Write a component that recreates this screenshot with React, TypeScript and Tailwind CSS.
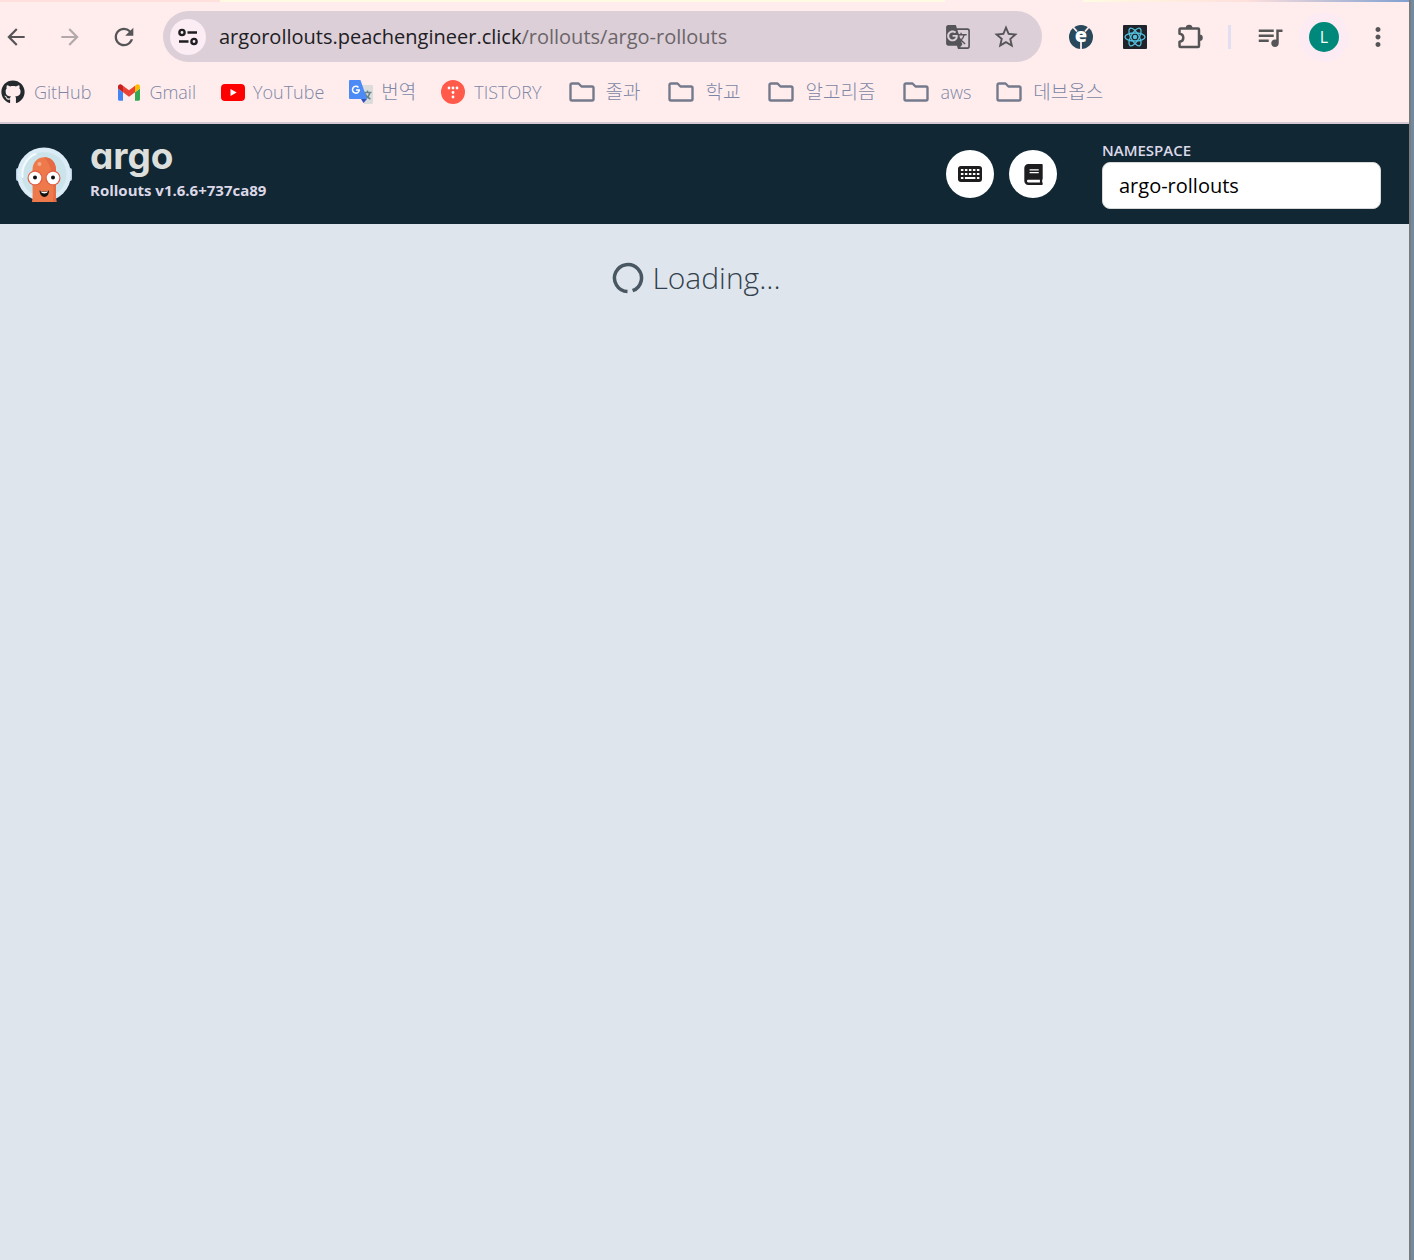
import React from 'react';
import { MdArrowBack, MdArrowForward, MdRefresh, MdStarBorder, MdGTranslate, MdQueueMusic, MdMoreVert } from 'react-icons/md';
import { FaGithub, FaBook } from 'react-icons/fa';

const iconButton = 'flex shrink-0 items-center justify-center text-[#555557]';

function TuneIcon() {
  return (
    <svg width="22" height="22" viewBox="0 0 22 22" fill="none" stroke="#1f1f23" strokeWidth="2.4">
      <circle cx="5" cy="6.5" r="2.6" />
      <path d="M10.5 6.5H20M2 15.5h9.5" />
      <circle cx="17" cy="15.5" r="2.6" />
    </svg>
  );
}

function PuzzleIcon() {
  return (
    <svg width="28" height="28" viewBox="0 0 28 28">
      <path
        d="M4.500 5.500H22a1 1 0 0 1 1 1V23a1 1 0 0 1-1 1H4.500a1 1 0 0 1-1-1v-4.200c2.400-.3 3.800-1.800 3.800-4s-1.400-3.700-3.800-4V6.500a1 1 0 0 1 1-1z"
        fill="none" stroke="#555557" strokeWidth="2.500" strokeLinejoin="round"
      />
      <path d="M9.800 5a3.300 3.300 0 0 1 6.600 0zM23.500 11.500a3.300 3.300 0 0 1 0 6.600z" fill="#555557" />
    </svg>
  );
}

function RobotIcon() {
  return (
    <svg width="24" height="24" viewBox="0 0 24 24" className="overflow-visible">
      <circle cx="12" cy="12" r="12" fill="#29485c" />
      <path d="M4 2l4 4.500M20 2l-4 4.500M12 17v7" stroke="#ffedee" strokeWidth="1.800" />
      <text x="12" y="17" textAnchor="middle" fill="#fff" className="text-[20px] font-extrabold">e</text>
    </svg>
  );
}

function ReactIcon() {
  return (
    <svg width="24" height="24" viewBox="0 0 24 24">
      <rect width="24" height="24" rx="1" fill="#20232a" />
      <g fill="none" stroke="#53c1de" strokeWidth="1.300">
        <ellipse cx="12" cy="12" rx="10" ry="4" />
        <ellipse cx="12" cy="12" rx="10" ry="4" transform="rotate(60 12 12)" />
        <ellipse cx="12" cy="12" rx="10" ry="4" transform="rotate(120 12 12)" />
      </g>
      <circle cx="12" cy="12" r="2.200" fill="#53c1de" />
    </svg>
  );
}

function KeyboardIcon() {
  return (
    <svg width="24" height="16" viewBox="0 0 24 16">
      <rect width="24" height="16" rx="3" fill="#1d1d1f" />
      <g fill="none" stroke="#fff" strokeWidth="2.200">
        <path d="M2.900 4h18.500" strokeDasharray="2.500 1.500" />
        <path d="M2.900 8h18.500" strokeDasharray="2.500 1.500" />
        <path d="M2.900 12h2.500M6.900 12h10.500M18.900 12h2.500" />
      </g>
    </svg>
  );
}

function GmailIcon() {
  return (
    <svg width="22" height="17" viewBox="52 42 88 66">
      <path fill="#4285f4" d="M58 108h14V74L52 59v43c0 3.320 2.690 6 6 6" />
      <path fill="#34a853" d="M120 108h14c3.320 0 6-2.690 6-6V59l-20 15" />
      <path fill="#fbbc04" d="M120 48v26l20-15v-8c0-7.420-8.470-11.650-14.400-7.200" />
      <path fill="#ea4335" d="M72 74V48l24 18 24-18v26L96 92" />
      <path fill="#c5221f" d="M52 51v8l20 15V48l-5.600-4.200c-5.940-4.450-14.400-.22-14.400 7.200" />
    </svg>
  );
}

function YouTubeIcon() {
  return (
    <svg width="24" height="17" viewBox="0 0 24 17">
      <rect width="24" height="17" rx="4" fill="#f00" />
      <path d="M9.500 5v7l6.200-3.500z" fill="#fff" />
    </svg>
  );
}

function TranslateIcon() {
  return (
    <svg width="24" height="24" viewBox="0 0 24 24">
      <path d="M10 5h13a1 1 0 0 1 1 1v17a1 1 0 0 1-1 1h-8z" fill="#dcdcdc" />
      <path d="M14.500 12.500h8M18.500 10.500v2M21 12.500c-.8 3-2.700 5.300-5 6.500M16 13.500c1 2.500 3 4.500 5.500 5.500" stroke="#66858b" strokeWidth="1.400" fill="none" />
      <path d="M12 19h6l-3.500 4z" fill="#3450b8" />
      <path d="M1 0h10.500l6.500 19H1a1 1 0 0 1-1-1V1a1 1 0 0 1 1-1z" fill="#4c8bf5" />
      <path d="M9.500 7.500A3.400 3.400 0 1 0 10.300 10H7" stroke="#fff" strokeWidth="1.500" fill="none" />
    </svg>
  );
}

function TistoryIcon() {
  return (
    <svg width="24" height="24" viewBox="0 0 24 24">
      <circle cx="12" cy="12" r="12" fill="#ff5a4a" />
      <g fill="#fff">
        <circle cx="8" cy="8" r="1.400" /><circle cx="12" cy="8" r="1.400" /><circle cx="16" cy="8" r="1.400" />
        <circle cx="12" cy="12.500" r="1.400" /><circle cx="12" cy="17" r="1.400" />
      </g>
    </svg>
  );
}

function FolderIcon() {
  return (
    <svg width="26" height="20" viewBox="0 0 26 20" fill="none" stroke="#747a8c" strokeWidth="2.400" strokeLinejoin="round">
      <path d="M3 1.500h6.500l3 3H23a1.500 1.500 0 0 1 1.500 1.500v11a1.500 1.500 0 0 1-1.500 1.500H3A1.500 1.500 0 0 1 1.500 17V3A1.500 1.500 0 0 1 3 1.500z" />
    </svg>
  );
}

function ArgoMascot() {
  return (
    <svg width="56" height="56" viewBox="0 0 56 56">
      <rect y="22" width="56" height="13" rx="2" fill="#b4cde2" />
      <circle cx="28" cy="28.500" r="27" fill="#dcecf6" />
      <circle cx="28" cy="28.500" r="22.500" fill="#cbe4eb" />
      <path d="M6.500 31c-1-10 4-19 13-23" stroke="#f4fbfd" strokeWidth="2" fill="none" strokeLinecap="round" />
      <path d="M16 56c1-5 .5-12 .5-18V24c0-17 23.500-17 23.500 0v14c0 6-.5 13 .5 18z" fill="#ee794b" />
      <path d="M28 11.300c7 0 12 4.500 12 12.700v14c0 6-.5 13 .5 18H37c1-10 2-34-9-44.700z" fill="#e56a45" />
      <circle cx="19" cy="32" r="7.500" fill="#e35f45" />
      <circle cx="37" cy="32" r="7.500" fill="#e35f45" />
      <circle cx="19" cy="32" r="6.300" fill="#fff" />
      <circle cx="37" cy="32" r="6.300" fill="#fff" />
      <circle cx="19" cy="31.500" r="2" fill="#111" />
      <circle cx="37" cy="31.500" r="2" fill="#111" />
      <path d="M23.500 44.500c3 1.500 6.500 1.500 9.500 0 0 8.500-9 8.500-9.500 0z" fill="#111" />
      <path d="M24.500 45.200c2.500 1 5 1 7.500 0-1 3-6 3-7.500 0z" fill="#fff" />
      <circle cx="23.500" cy="18" r="2" fill="#f5a889" />
    </svg>
  );
}

const latinItem = 'gap-[9px] text-[18px]';
const folderItem = 'gap-[11px] pr-[3px] text-[19px]';

const bookmarks: { label: string; icon: React.ReactNode; className: string }[] = [
  { label: 'GitHub', icon: <FaGithub size={24} color="#24292e" />, className: latinItem + ' pr-[2px]' },
  { label: 'Gmail', icon: <GmailIcon />, className: latinItem },
  { label: 'YouTube', icon: <YouTubeIcon />, className: 'gap-2 text-[18px]' },
  { label: '번역', icon: <TranslateIcon />, className: 'gap-2 text-[19px]' },
  { label: 'TISTORY', icon: <TistoryIcon />, className: latinItem + ' pr-[2px]' },
  { label: '졸과', icon: <FolderIcon />, className: folderItem },
  { label: '학교', icon: <FolderIcon />, className: folderItem },
  { label: '알고리즘', icon: <FolderIcon />, className: folderItem },
  { label: 'aws', icon: <FolderIcon />, className: 'gap-[11px] text-[18px]' },
  { label: '데브옵스', icon: <FolderIcon />, className: folderItem },
];

function BrowserChrome() {
  return (
    <div className="border-b-2 border-[#d5c8d3] bg-[#ffedee]">
      <div className="flex h-[2px]">
        <div className="w-[220px] bg-[#ffe0dc]" />
        <div className="flex-1 bg-[#fffbe2]" />
        <div className="w-[138px]" />
        <div className="w-[326px] bg-linear-to-r from-[#fffbe2] via-[#ffe0dc] to-[#7f9fd0]" />
      </div>
      <div className="flex h-[69px] items-center pr-4">
        <button aria-label="Back" className={iconButton + ' ml-1 size-6'}><MdArrowBack size={26} className="shrink-0" /></button>
        <button aria-label="Forward" className="ml-[30px] flex size-6 shrink-0 items-center justify-center text-[#b3a9ab]"><MdArrowForward size={26} className="shrink-0" /></button>
        <button aria-label="Reload" className={iconButton + ' ml-[30px] size-6'}><MdRefresh size={28} className="shrink-0" /></button>
        <div className="ml-[27px] flex h-[51px] min-w-0 flex-1 items-center rounded-full bg-[#dccfd7] pr-[22px] pl-[7px]">
          <button aria-label="Site information" className="flex size-9 shrink-0 items-center justify-center rounded-full bg-[#fcecf3]"><TuneIcon /></button>
          <p className="ml-[13px] min-w-0 flex-1 truncate text-[20px] text-[#6b656a]">
            <span className="text-[#202024]">argorollouts.peachengineer.click</span>/rollouts/argo-rollouts
          </p>
          <button aria-label="Translate" className={iconButton}><MdGTranslate size={26} /></button>
          <button aria-label="Bookmark" className={iconButton + ' ml-[21px]'}><MdStarBorder size={28} /></button>
        </div>
        <button aria-label="Robot extension" className={iconButton + ' ml-[27px]'}><RobotIcon /></button>
        <button aria-label="React extension" className={iconButton + ' ml-[30px]'}><ReactIcon /></button>
        <button aria-label="Extensions" className={iconButton + ' ml-[29px]'}><PuzzleIcon /></button>
        <div className="ml-[24px] h-6 w-[3px] bg-[#e2dff0]" />
        <button aria-label="Media" className={iconButton + ' ml-[24px]'}><MdQueueMusic size={30} /></button>
        <button aria-label="Profile" className="ml-[24px] flex size-[30px] shrink-0 items-center justify-center rounded-full bg-[#00897b] text-[16px] text-white ring-10 ring-[#fcebf3]">L</button>
        <button aria-label="Menu" className={iconButton + ' ml-6'}><MdMoreVert size={30} /></button>
      </div>
      <nav aria-label="Bookmarks" className="flex h-[51px] items-start gap-[25px] pt-[7px] pl-px">
        {bookmarks.map((b) => (
          <a key={b.label} href="#" className={'flex h-7 items-center leading-7 font-light text-[#7d86a4] ' + b.className}>
            {b.icon}
            <span className="whitespace-nowrap">{b.label}</span>
          </a>
        ))}
      </nav>
    </div>
  );
}

function ArgoHeader() {
  return (
    <header className="flex h-[100px] items-center bg-[#112733] pr-7 pl-4">
      <ArgoMascot />
      <div className="ml-[18px] pb-2">
        <div className="mb-2 text-[37px] leading-8 font-bold text-[#dcdfdc] [font-family:Inter,sans-serif] [font-feature-settings:'cv11']">argo</div>
        <div className="text-[15px] leading-5 font-bold text-[#dcd8e8]">Rollouts v1.6.6+737ca89</div>
      </div>
      <div className="ml-auto flex gap-[15px]">
        <button aria-label="Keyboard shortcuts" className="flex size-12 items-center justify-center rounded-full bg-white"><KeyboardIcon /></button>
        <button aria-label="Documentation" className="flex size-12 items-center justify-center rounded-full bg-white text-[#1d1d1f]"><FaBook size={21} /></button>
      </div>
      <div className="ml-[45px] w-[279px]">
        <label htmlFor="namespace" className="block text-[15px] leading-5 font-semibold text-[#dcd8e8]">NAMESPACE</label>
        <input id="namespace" defaultValue="argo-rollouts" className="mt-[2px] block h-[47px] w-full rounded-lg border border-[#d8d8d8] bg-white px-4 text-[20px] text-black" />
      </div>
    </header>
  );
}

export default function App() {
  return (
    <div className="flex min-h-screen bg-[#738ba0] pr-[3px] [font-family:'Open_Sans','Noto_Sans_CJK_KR',sans-serif]">
      <div className="flex min-w-0 flex-1 flex-col border-r-2 border-[#7b7b7b] bg-[#dee5ec]">
        <BrowserChrome />
        <ArgoHeader />
        <main className="flex items-center justify-center gap-2 pt-8 pr-4 text-[30px] leading-[44px] font-light text-[#33414d]">
          <svg width="32" height="32" viewBox="0 0 32 32" fill="none" stroke="#495763" strokeWidth="3.500">
            <path d="M15.500 29.500A13.500 13.500 0 1 1 20.600 28.700" />
          </svg>
          <span>Loading...</span>
        </main>
      </div>
    </div>
  );
}
